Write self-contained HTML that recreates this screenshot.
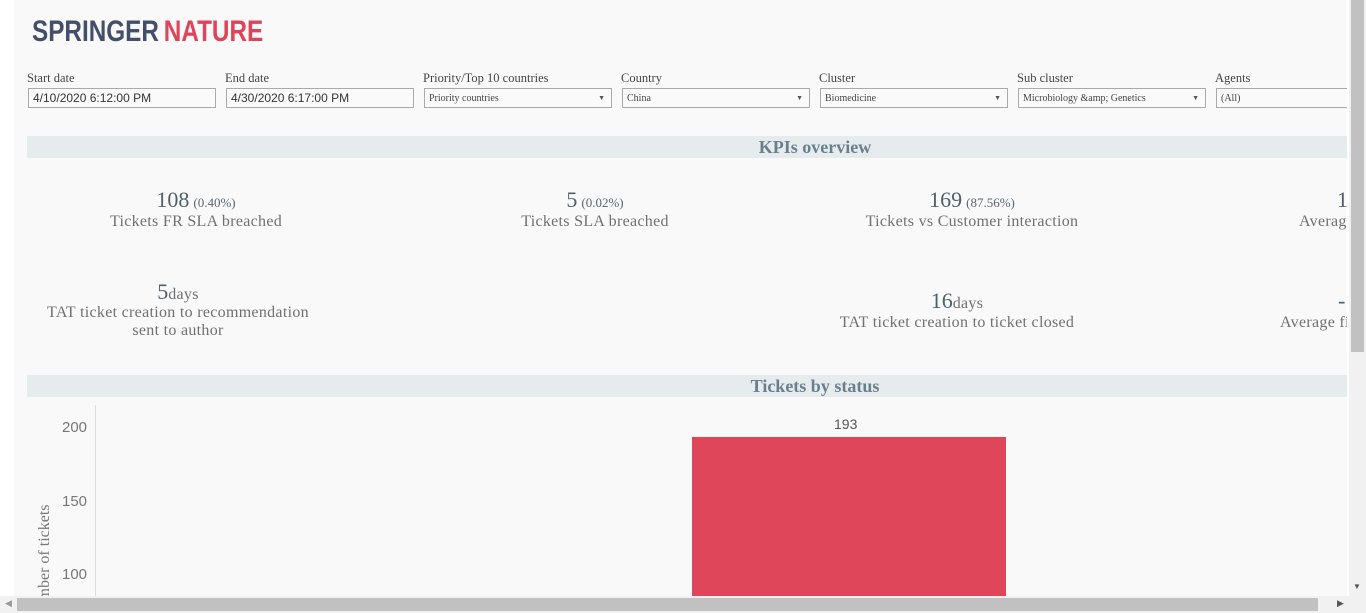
<!DOCTYPE html>
<html><head><meta charset="utf-8"><style>
*{margin:0;padding:0;box-sizing:border-box}
body{width:1366px;height:613px;overflow:hidden;background:#fff;position:relative;font-family:"Liberation Serif",serif;color:#555}
.pg{position:absolute;left:14px;top:0;width:1333px;height:596px;background:#f9f9f9;overflow:hidden}
.a{position:absolute;white-space:nowrap}
.lbl{font-size:12.5px;color:#444}
.box{position:absolute;height:20px;border:1px solid #aaa;background:#fafafa;font-size:12px;font-family:"Liberation Sans",sans-serif;color:#333;padding:2px 4px;line-height:14px}
.dd{font-family:"Liberation Serif",serif;font-size:10px;line-height:15px;color:#444}
.dd:after{content:"▼";position:absolute;right:6px;top:2px;font-size:7px;color:#555}
.band{position:absolute;left:13px;width:1322px;height:22px;background:#e6ebee}
.bt{position:absolute;width:400px;left:601px;text-align:center;font-weight:bold;font-size:18px;color:#6a7f8c;line-height:22px}
.kn{font-size:22px;color:#4f5f6b}
.kp{font-size:13px;color:#5a6670}
.kl{font-size:16px;color:#707070;letter-spacing:0.3px}
.c{position:absolute;text-align:center;white-space:nowrap;line-height:19px}
.lg{font-family:"Liberation Sans",sans-serif;font-weight:bold;display:inline-block;transform:scaleX(0.81);transform-origin:0 0;font-size:30px;line-height:30px}
</style></head><body>
<div class="pg">
<div class="a" style="left:18px;top:17px"><div class="lg"><span style="color:#44506b">SPRINGER</span><span style="color:#e0435a;margin-left:6px">NATURE</span></div></div>

<div class="a lbl" style="left:13px;top:71px">Start date</div>
<div class="box" style="left:14px;top:88px;width:188px">4/10/2020 6:12:00 PM</div>
<div class="a lbl" style="left:211px;top:71px">End date</div>
<div class="box" style="left:212px;top:88px;width:188px">4/30/2020 6:17:00 PM</div>
<div class="a lbl" style="left:409px;top:71px">Priority/Top 10 countries</div>
<div class="box dd" style="left:410px;top:88px;width:188px">Priority countries</div>
<div class="a lbl" style="left:607px;top:71px">Country</div>
<div class="box dd" style="left:608px;top:88px;width:188px">China</div>
<div class="a lbl" style="left:805px;top:71px">Cluster</div>
<div class="box dd" style="left:806px;top:88px;width:188px">Biomedicine</div>
<div class="a lbl" style="left:1003px;top:71px">Sub cluster</div>
<div class="box dd" style="left:1004px;top:88px;width:188px">Microbiology &amp;amp; Genetics</div>
<div class="a lbl" style="left:1201px;top:71px">Agents</div>
<div class="box" style="left:1202px;top:88px;width:140px;font-family:'Liberation Serif',serif;font-size:10px;line-height:15px;color:#444">(All)</div>

<div class="band" style="top:136px"></div><div class="bt" style="top:136px">KPIs overview</div>

<div class="c" style="left:62px;width:240px;top:190px"><span class="kn">108</span> <span class="kp">(0.40%)</span><br><span class="kl">Tickets FR SLA breached</span></div>
<div class="c" style="left:461px;width:240px;top:190px"><span class="kn">5</span> <span class="kp">(0.02%)</span><br><span class="kl">Tickets SLA breached</span></div>
<div class="c" style="left:818px;width:280px;top:190px"><span class="kn">169</span> <span class="kp">(87.56%)</span><br><span class="kl">Tickets vs Customer interaction</span></div>
<div class="a" style="left:1285px;top:190px;line-height:19px"><span class="kn" style="margin-left:38px">1</span><br><span class="kl">Average</span></div>

<div class="c" style="left:14px;width:300px;top:283px;line-height:18px"><span class="kn">5</span><span class="kl">days</span><br><span class="kl">TAT ticket creation to recommendation<br>sent to author</span></div>
<div class="c" style="left:798px;width:290px;top:291px"><span class="kn">16</span><span class="kl">days</span><br><span class="kl">TAT ticket creation to ticket closed</span></div>
<div class="a" style="left:1266px;top:291px;line-height:19px"><span class="kn" style="margin-left:58px">-1</span><br><span class="kl">Average first</span></div>

<div class="band" style="top:375px"></div><div class="bt" style="top:375px">Tickets by status</div>

<div class="a" style="left:81px;top:405px;width:1px;height:191px;background:#ddd"></div>
<div class="a" style="left:48px;top:419px;font-family:'Liberation Sans',sans-serif;font-size:15px;color:#777">200</div>
<div class="a" style="left:48px;top:493px;font-family:'Liberation Sans',sans-serif;font-size:15px;color:#777">150</div>
<div class="a" style="left:48px;top:566px;font-family:'Liberation Sans',sans-serif;font-size:15px;color:#777">100</div>
<div class="a" style="left:22px;top:620px;transform:rotate(-90deg);transform-origin:0 0;font-size:16px;color:#777">Number of tickets</div>
<div class="a" style="left:678px;top:437px;width:314px;height:159px;background:#df4659"></div>
<div class="a" style="left:820px;top:416px;font-size:14px;color:#555;font-family:'Liberation Sans',sans-serif">193</div>
</div>

<div class="a" style="left:1349px;top:0;width:17px;height:596px;background:#f1f1f1"></div>
<div class="a" style="left:1351px;top:0;width:13px;height:352px;background:#c1c1c1"></div>
<div class="a" style="left:1353px;top:582px;font-size:8px;color:#555">▼</div>
<div class="a" style="left:0;top:596px;width:1366px;height:17px;background:#f1f1f1"></div>
<div class="a" style="left:17px;top:598px;width:1301px;height:13px;background:#c1c1c1"></div>
<div class="a" style="left:5px;top:598px;font-size:9px;color:#999">◀</div>
<div class="a" style="left:1337px;top:598px;font-size:9px;color:#555">▶</div>
</body></html>
